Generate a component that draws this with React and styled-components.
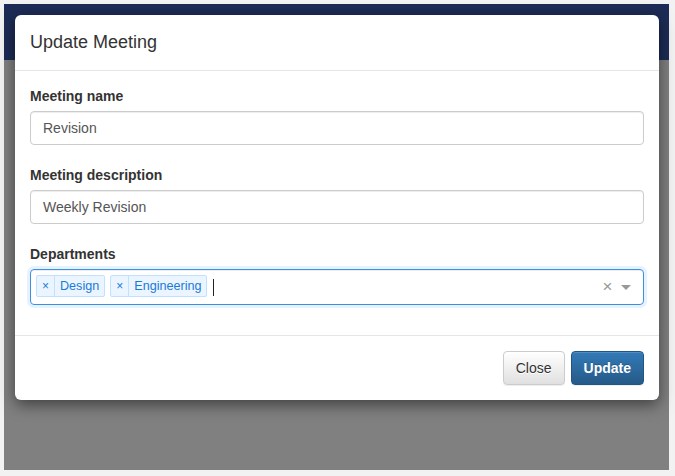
import React from "react";
import styled, { createGlobalStyle } from "styled-components";

const Global = createGlobalStyle`
  html, body { margin: 0; padding: 0; background: #f2f2f2; }
  body { font-family: "Liberation Sans", Arial, sans-serif; font-size: 14px; color: #333; }
  * { box-sizing: border-box; }
`;

const Page = styled.div`
  width: 675px;
  height: 476px;
  padding: 4px 6px 6px 4px;
`;

const Frame = styled.div`
  position: relative;
  width: 665px;
  height: 466px;
  display: flex;
  flex-direction: column;
`;

const Navbar = styled.div`
  height: 56px;
  background: #1d2c56;
`;

const Backdrop = styled.div`
  flex: 1;
  background: #808080;
`;

const Modal = styled.div`
  position: absolute;
  left: 11px;
  top: 11px;
  width: 644px;
  background: #fff;
  border-radius: 6px;
  box-shadow: 0 5px 15px rgba(0, 0, 0, 0.5);
  display: flex;
  flex-direction: column;
`;

const Header = styled.div`
  padding: 15px;
  border-bottom: 1px solid #e5e5e5;
`;

const Title = styled.h4`
  margin: 0;
  font-size: 18px;
  font-weight: 400;
  line-height: 25px;
  color: #333;
`;

const Body = styled.div`
  padding: 15px 15px 0;
`;

const Group = styled.div`
  margin-bottom: ${(p) => (p.$last ? "30px" : "20px")};
  display: flex;
  flex-direction: column;
`;

const Label = styled.label`
  font-weight: 700;
  font-size: 14px;
  line-height: 20px;
  margin-bottom: 5px;
  color: #333;
`;

const Input = styled.div`
  height: 34px;
  padding: 6px 12px;
  font-size: 14px;
  line-height: 20px;
  color: #555;
  border: 1px solid #ccc;
  border-radius: 4px;
  box-shadow: inset 0 1px 1px rgba(0, 0, 0, 0.075);
  background: #fff;
`;

const SelectControl = styled.div`
  height: 36px;
  border: 1px solid #3d8fe0;
  border-radius: 4px;
  box-shadow: inset 0 1px 1px rgba(0, 0, 0, 0.075), 0 0 0 3px rgba(0, 126, 255, 0.1);
  display: flex;
  align-items: flex-start;
  padding-right: 12px;
`;

const Values = styled.div`
  flex: 1;
  display: flex;
  align-items: flex-start;
`;

const Tag = styled.div`
  display: flex;
  margin-left: 5px;
  margin-top: 5px;
  background: #ebf5ff;
  border: 1px solid #c2e0ff;
  border-radius: 2px;
  color: #1a7ad8;
  font-size: 12.6px;
  line-height: 18px;
`;

const TagIcon = styled.span`
  border-right: 1px solid #c2e0ff;
  padding: 1px 5px 1px;
  font-size: 12px;
`;

const TagLabel = styled.span`
  padding: 1px 5px;
`;

const Caret = styled.span`
  width: 1px;
  height: 17px;
  background: #222;
  margin-left: 6px;
  margin-top: 9px;
`;

const Clear = styled.span`
  color: #999;
  font-size: 17px;
  line-height: 34px;
  width: 17px;
  text-align: center;
`;

const Arrow = styled.span`
  width: 0;
  height: 0;
  border-style: solid;
  border-color: #999 transparent transparent;
  border-width: 5px 5px 2.5px;
  margin-left: 5px;
  margin-top: 15px;
`;

const Footer = styled.div`
  padding: 15px;
  border-top: 1px solid #e5e5e5;
  display: flex;
  justify-content: flex-end;
  gap: 6px;
`;

const Button = styled.button`
  height: 34px;
  padding: 6px 12px;
  font-family: "Liberation Sans", Arial, sans-serif;
  font-size: 14px;
  line-height: 20px;
  border-radius: 4px;
  cursor: pointer;
  ${(p) =>
    p.$primary
      ? `
    color: #fff;
    font-weight: 700;
    background: linear-gradient(to bottom, #337ab7 0%, #265a88 100%);
    border: 1px solid #245580;
    text-shadow: 0 -1px 0 rgba(0,0,0,.2);
    box-shadow: inset 0 1px 0 rgba(255,255,255,.15), 0 1px 1px rgba(0,0,0,.075);
  `
      : `
    color: #333;
    background: linear-gradient(to bottom, #fff 0%, #e0e0e0 100%);
    border: 1px solid #ccc;
    text-shadow: 0 1px 0 #fff;
    box-shadow: inset 0 1px 0 rgba(255,255,255,.15), 0 1px 1px rgba(0,0,0,.075);
  `}
`;

export default function App() {
  return (
    <Page>
      <Global />
      <Frame>
        <Navbar />
        <Backdrop />
        <Modal>
          <Header>
            <Title>Update Meeting</Title>
          </Header>
          <Body>
            <Group>
              <Label>Meeting name</Label>
              <Input>Revision</Input>
            </Group>
            <Group>
              <Label>Meeting description</Label>
              <Input>Weekly Revision</Input>
            </Group>
            <Group $last>
              <Label>Departments</Label>
              <SelectControl>
                <Values>
                  <Tag>
                    <TagIcon>×</TagIcon>
                    <TagLabel>Design</TagLabel>
                  </Tag>
                  <Tag>
                    <TagIcon>×</TagIcon>
                    <TagLabel>Engineering</TagLabel>
                  </Tag>
                  <Caret />
                </Values>
                <Clear>×</Clear>
                <Arrow />
              </SelectControl>
            </Group>
          </Body>
          <Footer>
            <Button>Close</Button>
            <Button $primary>Update</Button>
          </Footer>
        </Modal>
      </Frame>
    </Page>
  );
}
